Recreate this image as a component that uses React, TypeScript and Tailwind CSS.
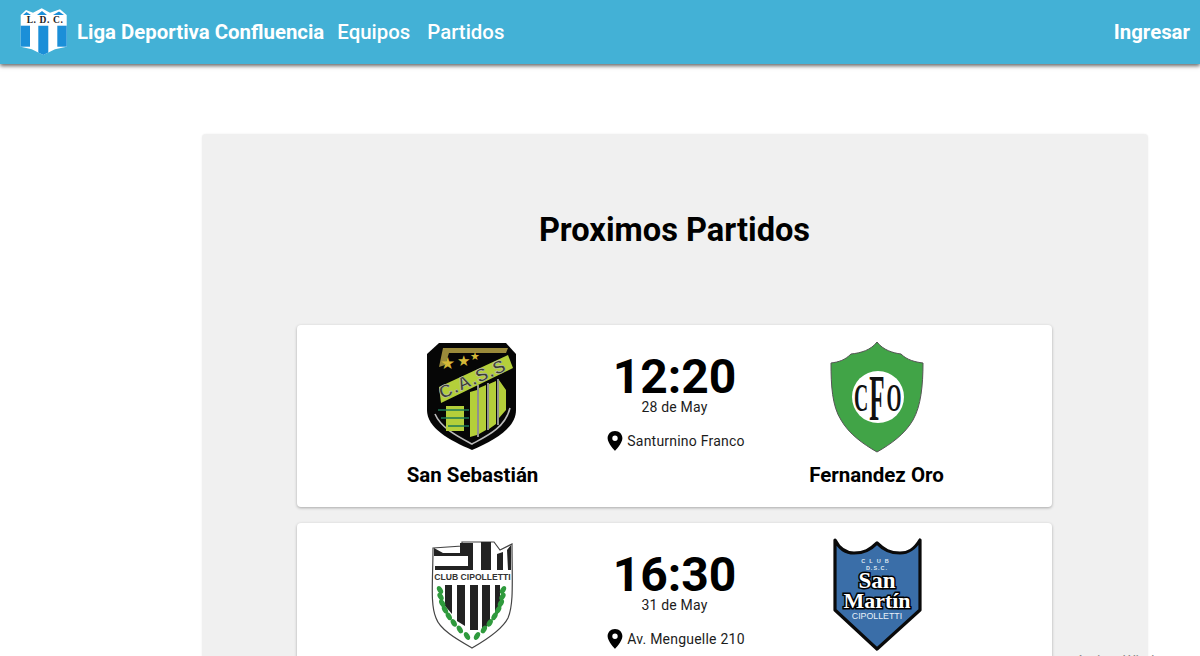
const ROBOTO = "font-['Roboto',sans-serif]";

function LdcLogo() {
  return (
    <svg width="50" height="50" viewBox="0 0 50 50" className="shrink-0">
      <path d="M1.7 8 L7 3 L14 5.7 L22.7 1.3 L31 5.7 L41 2.3 L47.7 8 V39.7 L36 42.3 L24.3 48 L12.7 42.3 L1.7 39.7Z" fill="#fff" />
      <path d="M4 8 L7.5 5 L12 8Z M18 8 L23 4 L28 8Z M34 8 L40 4.5 L45 8Z" fill="#1b8fd8" />
      <rect x="1.7" y="18.7" width="9.3" height="21" fill="#1b8fd8" />
      <path d="M19.3 18.7 H29.3 V45.5 L24.3 48 L19.3 45.5Z" fill="#1b8fd8" />
      <rect x="38.3" y="18.7" width="9.4" height="21" fill="#1b8fd8" />
      <text x="26" y="16.3" textAnchor="middle" fontFamily="'Liberation Serif',serif" fontWeight="700" fontSize="9.5" fill="#222" letterSpacing=".6">
        L. D. C.
      </text>
    </svg>
  );
}

function CassCrest() {
  return (
    <svg width="130" height="130" viewBox="0 0 130 130" className="shrink-0">
      <g transform="translate(3 1)">
        <path d="M28 13 H95 L105 24 V80 C105 98 84 110 61 120 C38 110 16 98 16 80 V24Z" fill="#060606" />
        <path d="M24 84 C30 98 46 106 61 114 C76 106 94 98 99 78" fill="none" stroke="#bbb" strokeWidth="1.6" />
        <path d="M28 37 L32 18 H97 L95 23 H38 L34 35Z" fill="#9a8a3a" />
        <path d="M28 57 L97 25 L102 38 L30 73Z" fill="#b4cf3a" />
        <text x="62" y="55" textAnchor="middle" fontFamily="'Liberation Sans',sans-serif" fontWeight="700" fontSize="18" fill="#3c3f32" stroke="#ccc" strokeWidth=".5" transform="rotate(-24 62 50)" letterSpacing="1">
          C.A.S.S
        </text>
        <text x="29" y="39" fontSize="17" fill="#d4b838" fontFamily="'DejaVu Sans',sans-serif">★</text>
        <text x="46" y="36" fontSize="15" fill="#d4b838" fontFamily="'DejaVu Sans',sans-serif">★</text>
        <text x="59" y="30" fontSize="11" fill="#d4b838" fontFamily="'DejaVu Sans',sans-serif">★</text>
        <path d="M59 62 L66 60 V105 L59 107Z M68 58 L75 55 V100 L68 104Z M78 54 L85 51 V94 L78 99Z M88 50 V88 L95 80 V60 Z" fill="#b4cf3a" />
        <path d="M67 55 V107 M77 53 V100 M87 49 V95" stroke="#ccc" strokeWidth="1.4" />
        <rect x="35" y="76" width="18" height="25" fill="#b4cf3a" />
        <path d="M27 80 H58 M30 88 H58 M37 96 H58" stroke="#1d7a55" strokeWidth="1.4" />
      </g>
    </svg>
  );
}

function CfoCrest() {
  return (
    <svg width="130" height="130" viewBox="0 0 130 130" className="shrink-0">
      <g transform="translate(-1 1)">
        <path d="M66 12 C60 20 50 23 40 24 C34 30 28 32 20 33 C20 55 21 76 30 90 C38 104 52 114 66 122 C80 114 94 104 102 90 C110 76 112 55 112 33 C104 32 96 30 90 24 C82 23 72 20 66 12Z" fill="#41a447" stroke="#555" strokeWidth="1" />
        <circle cx="67" cy="67" r="26" fill="#fff" />
        <text textAnchor="middle" fontFamily="'Liberation Serif',serif" fontWeight="700" fontSize="41" fill="#111" transform="translate(50 81) scale(.48 1)">C</text>
        <text textAnchor="middle" fontFamily="'Liberation Serif',serif" fontWeight="700" fontSize="66" fill="#111" transform="translate(66 90) scale(.38 1)">F</text>
        <text textAnchor="middle" fontFamily="'Liberation Serif',serif" fontWeight="700" fontSize="41" fill="#111" transform="translate(83 81) scale(.47 1)">O</text>
      </g>
    </svg>
  );
}

const LEAVES = [0, 1, 2, 3, 4, 5, 6, 7];

function CipoCrest() {
  return (
    <svg width="130" height="126" viewBox="0 0 130 126" className="shrink-0">
      <g transform="translate(2 1)">
        <path d="M23 18 L52 16 V12 H84 L90 20 L102 14 C102 50 104 74 98 88 C92 100 76 110 62 118 C48 110 30 100 26 88 C20 74 23 50 23 18Z" fill="#fff" stroke="#444" strokeWidth="1.2" />
        <path d="M24 18 L33 23 H50 V13 H63 V40 H25 V36 H58 V26 H24Z" fill="#222" />
        <path d="M71 12 H81 V40 H71Z M87 24 L93 22 V40 H87Z M97 20 L101 15 V40 H98Z" fill="#222" />
        <text x="62.5" y="50" textAnchor="middle" fontFamily="'Liberation Sans',sans-serif" fontWeight="700" fontSize="8.6" fill="#333">CLUB CIPOLLETTI</text>
        <path d="M35 55 H42 V84 L35 76Z M47 55 H55 V96 L47 91Z M60 55 H68 V100 H60Z M72 55 H80 V94 L72 100Z M85 55 H90 V80 L85 88Z" fill="#222" />
        {LEAVES.map((i) => {
          const t = i / 7;
          const ly = 60 + t * 46;
          const lx = 30 + 27 * t * t;
          const rx = 93 - 26 * t * t;
          return (
            <g key={i} fill="#2f9a3d">
              <ellipse cx={lx} cy={ly} rx="2.6" ry="4.2" transform={`rotate(-30 ${lx} ${ly})`} />
              <ellipse cx={rx} cy={ly} rx="2.6" ry="4.2" transform={`rotate(30 ${rx} ${ly})`} />
            </g>
          );
        })}
      </g>
    </svg>
  );
}

function SanMartinCrest() {
  return (
    <svg width="130" height="126" viewBox="0 0 130 126" className="shrink-0">
      <g transform="translate(-2 1)">
        <path d="M25 10 C30 20 36 23 44 23 C54 23 60 20 67 13 C74 20 80 23 90 23 C98 23 104 20 110 10 V80 L67 119 L25 80Z" fill="#3a6ea8" stroke="#0a0a0a" strokeWidth="3.2" strokeLinejoin="round" />
        <text x="67" y="33" textAnchor="middle" fontFamily="'Liberation Sans',sans-serif" fontWeight="700" fontSize="5.5" fill="#dfe9f3" letterSpacing="4">CLUB</text>
        <text x="67" y="40" textAnchor="middle" fontFamily="'Liberation Sans',sans-serif" fontWeight="700" fontSize="5.5" fill="#dfe9f3" letterSpacing="1">D.S.C.</text>
        <text x="67" y="58" textAnchor="middle" fontFamily="'Liberation Serif',serif" fontWeight="700" fontSize="23" fill="#fff" stroke="#000" strokeWidth="3" paintOrder="stroke">San</text>
        <text x="67" y="78" textAnchor="middle" fontFamily="'Liberation Serif',serif" fontWeight="700" fontSize="22" fill="#fff" stroke="#000" strokeWidth="3" paintOrder="stroke">Martín</text>
        <text x="67" y="89" textAnchor="middle" fontFamily="'Liberation Sans',sans-serif" fontSize="8.8" fill="#e8f0f8">CIPOLLETTI</text>
      </g>
    </svg>
  );
}

function Pin() {
  return (
    <svg width="16" height="20" viewBox="0 0 16 20" className="shrink-0">
      <path fillRule="evenodd" d="M8 0C3.6 0 .6 3.2.6 7.2c0 5 7.4 12.6 7.4 12.6s7.4-7.6 7.4-12.6C15.4 3.2 12.4 0 8 0Zm0 4.6a2.7 2.7 0 1 1 0 5.4 2.7 2.7 0 0 1 0-5.4Z" fill="#000" />
    </svg>
  );
}

function Team({ name, crest }: { name: string; crest: React.ReactNode }) {
  return (
    <div className="flex w-[202px] flex-col items-center">
      <div className="flex h-[116px] items-center justify-center">{crest}</div>
      <div className="mt-[8px] text-[20.5px] leading-[30px] font-bold whitespace-nowrap text-black">{name}</div>
    </div>
  );
}

type Match = {
  home: string;
  away: string;
  time: string;
  date: string;
  place: string;
  homeCrest: React.ReactNode;
  awayCrest: React.ReactNode;
};

const MATCHES: Match[] = [
  {
    home: 'San Sebastián',
    away: 'Fernandez Oro',
    time: '12:20',
    date: '28 de May',
    place: 'Santurnino Franco',
    homeCrest: <CassCrest />,
    awayCrest: <CfoCrest />,
  },
  {
    home: 'Club Cipolletti',
    away: 'San Martín',
    time: '16:30',
    date: '31 de May',
    place: 'Av. Menguelle 210',
    homeCrest: <CipoCrest />,
    awayCrest: <SanMartinCrest />,
  },
];

function MatchCard({ match }: { match: Match }) {
  return (
    <div className="flex h-[182px] shrink-0 justify-center rounded bg-white pt-[11px] shadow-[0_1px_3px_rgba(0,0,0,0.3)]">
      <Team name={match.home} crest={match.homeCrest} />
      <div className="flex w-[202px] flex-col items-center pt-[19px]">
        <div className="text-[48px] leading-[44px] font-bold text-black">{match.time}</div>
        <div className="text-[14px] leading-[16px] tracking-[0.2px] text-[#1c1c1c]">{match.date}</div>
        <div className="mt-[16px] ml-[3px] flex items-center gap-[4px]">
          <Pin />
          <span className="text-[14px] leading-[20px] tracking-[0.22px] text-[#1c1c1c]">{match.place}</span>
        </div>
      </div>
      <Team name={match.away} crest={match.awayCrest} />
    </div>
  );
}

export default function App() {
  return (
    <div className={`relative h-[656px] w-[1200px] overflow-hidden bg-white ${ROBOTO}`}>
      <header className="relative z-10 flex h-[64px] items-center bg-[#43b1d6] pr-[10px] pl-[19px] text-[20.4px] text-white shadow-[0_2px_4px_rgba(0,0,0,0.6)]">
        <LdcLogo />
        <span className="ml-[8px] font-bold">Liga Deportiva Confluencia</span>
        <nav className="ml-[13px] flex gap-[17px] font-medium">
          <span>Equipos</span>
          <span>Partidos</span>
        </nav>
        <span className="ml-auto font-bold">Ingresar</span>
      </header>
      <main className="mt-[70px] ml-[202px] flex w-[946px] flex-col rounded-sm bg-[#f0f0f0] pr-[96px] pl-[95px] shadow-[0_0_2px_rgba(0,0,0,0.08)]">
        <h1 className="mt-[76px] mb-[75px] text-center text-[32.6px] leading-[40px] font-bold text-black">Proximos Partidos</h1>
        <div className="flex flex-col gap-[16px]">
          {MATCHES.map((m) => (
            <MatchCard key={m.time} match={m} />
          ))}
        </div>
      </main>
      <div className="absolute top-[651px] left-[1076px] text-[14px] whitespace-nowrap text-[#8a8a8a]">Activar Windows</div>
    </div>
  );
}
